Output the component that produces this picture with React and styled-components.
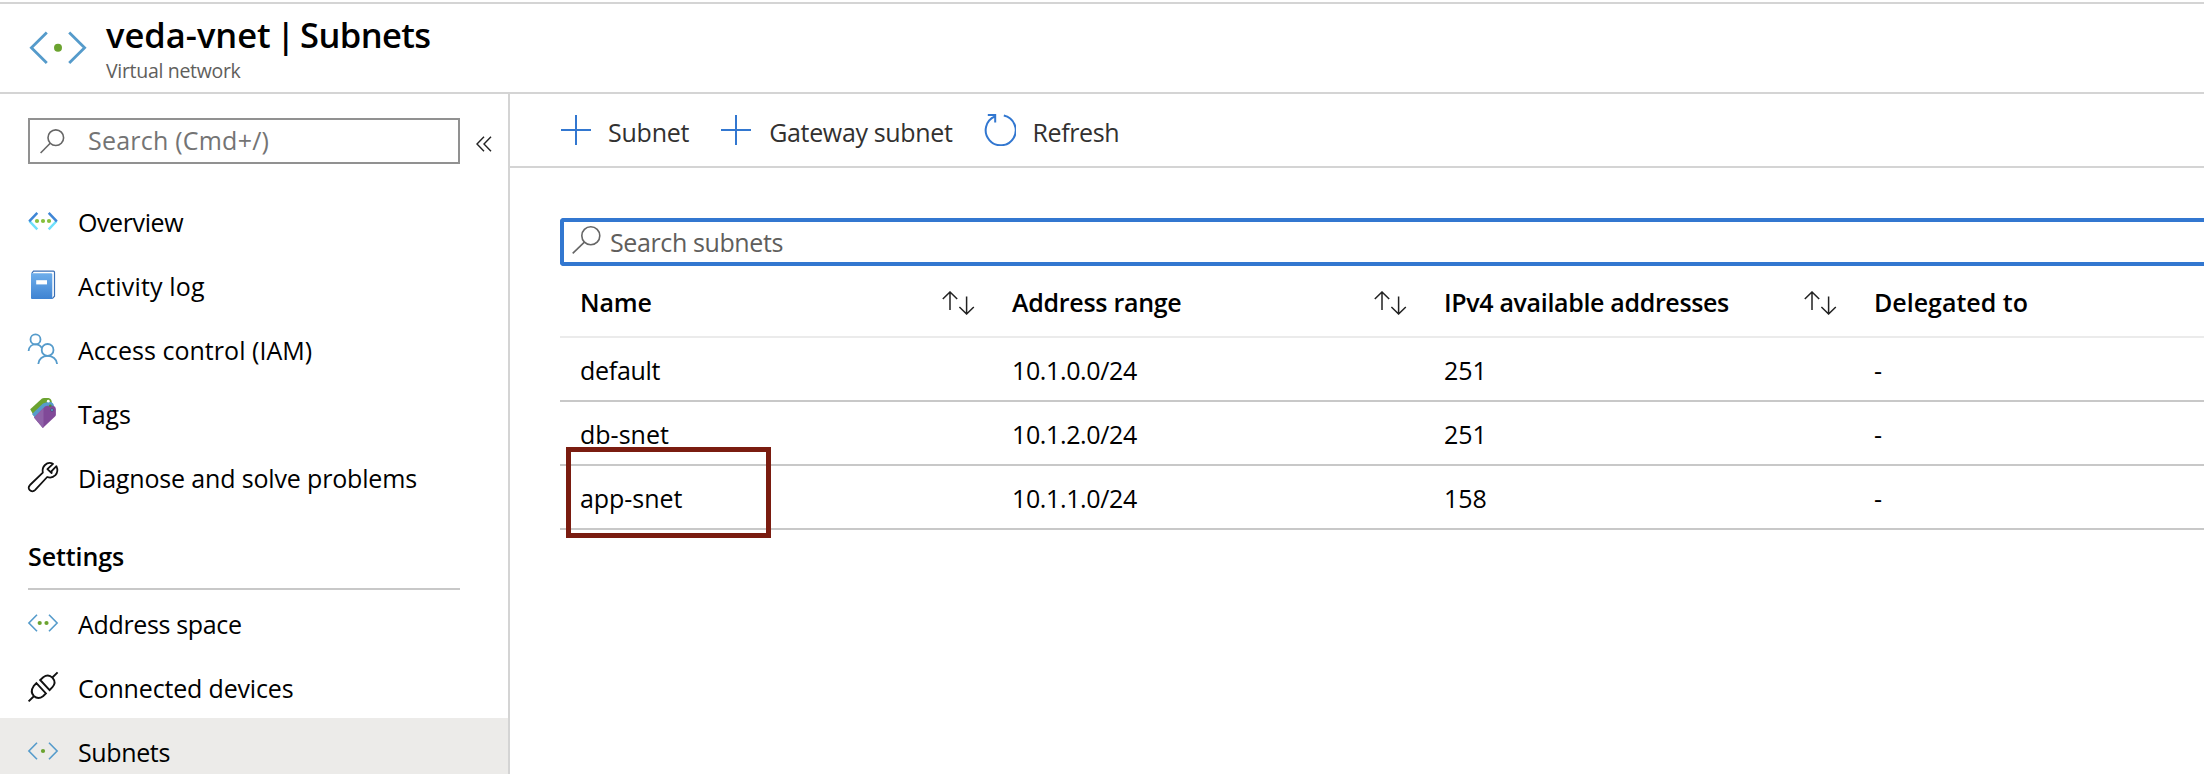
import React from 'react';
import styled, { createGlobalStyle } from 'styled-components';

const GlobalStyle = createGlobalStyle`
  * { box-sizing: border-box; }
  body {
    margin: 0;
    background: #fff;
    color: #000;
    font-family: "Open Sans", "Noto Sans", sans-serif;
    font-size: 25px;
    overflow: hidden;
  }
`;

const Page = styled.div`
  height: 774px;
  padding-top: 2px;
  display: flex;
  flex-direction: column;
  overflow: hidden;
`;

const Header = styled.header`
  flex: none;
  height: 92px;
  display: flex;
  align-items: flex-start;
  padding-left: 28px;
  border-top: 2px solid #d4d4d4;
  border-bottom: 2px solid #d4d4d4;
`;

const HeaderIcon = styled.svg`
  width: 60px;
  height: 34px;
  margin-top: 27px;
`;

const Titles = styled.div`
  padding: 8px 0 0 18px;
`;

const Title = styled.h1`
  margin: 0;
  font-size: 34.5px;
  font-weight: 600;
  line-height: 45px;
  letter-spacing: -0.57px;
  word-spacing: -3px;
  white-space: nowrap;
`;

const ResourceName = styled.span`
  letter-spacing: 0;
`;

const Subtitle = styled.div`
  font-size: 19.5px;
  line-height: 28px;
  letter-spacing: -0.31px;
  color: #605e5c;
`;

const Body = styled.div`
  flex: 1;
  display: flex;
  min-height: 0;
`;

const Sidebar = styled.nav`
  flex: none;
  width: 510px;
  border-right: 2px solid #d4d4d4;
  overflow: hidden;
`;

const SearchRow = styled.div`
  display: flex;
  align-items: center;
  padding: 24px 0 24px 28px;
`;

const MenuSearch = styled.div`
  width: 432px;
  height: 46px;
  border: 2px solid #919191;
  display: flex;
  align-items: center;
  padding-left: 10px;
  gap: 23px;
  color: #747474;
`;

const CollapseIcon = styled.svg`
  width: 16px;
  height: 16px;
  margin: 6px 0 0 16px;
`;

const Text = styled.span`
  white-space: nowrap;
  line-height: 36px;
  padding-top: 4px;
  letter-spacing: ${(p) => p.$track || 0}px;
`;

const Placeholder = styled(Text)`
  padding: 0 0 ${(p) => p.$raise || 0}px;
`;

const NavItem = styled.div`
  height: 64px;
  display: flex;
  align-items: center;
  gap: 20px;
  padding-left: 28px;
  background: ${(p) => (p.$selected ? '#ecebe9' : 'transparent')};
`;

const NavIcon = styled.svg`
  width: 30px;
  height: 30px;
  flex: none;
  overflow: visible;
`;

const SectionTitle = styled.div`
  width: 432px;
  height: 82px;
  margin-left: 28px;
  border-bottom: 2px solid #c8c8c8;
  font-weight: 600;
  padding-top: 26px;
  display: flex;
  align-items: flex-start;
`;

const Main = styled.main`
  flex: 1;
  min-width: 0;
`;

const Toolbar = styled.div`
  height: 74px;
  border-bottom: 2px solid #d4d4d4;
  display: flex;
  align-items: center;
  gap: 32px;
  padding-left: 51px;
  color: #323130;
`;

const Command = styled.div`
  display: flex;
  align-items: center;
  gap: ${(p) => p.$gap}px;
`;

const CommandIcon = styled.svg`
  width: ${(p) => p.$w}px;
  height: 32px;
`;

const Content = styled.div`
  padding: 50px 0 0 50px;
`;

const SubnetSearch = styled.div`
  height: 48px;
  border: 4px solid #3277d0;
  border-right: 0;
  border-radius: 4px 0 0 4px;
  display: flex;
  align-items: center;
  padding-left: 8px;
  gap: 9px;
  color: #605e5c;
`;

const SearchIcon = styled.svg`
  width: ${(p) => p.$w}px;
  height: ${(p) => p.$h}px;
  margin-top: ${(p) => p.$top || 0}px;
`;

const Table = styled.div`
  position: relative;
`;

const Row = styled.div`
  display: grid;
  grid-template-columns: 432px 432px 430px 1fr;
  height: ${(p) => (p.$head ? 72 : 64)}px;
  border-bottom: 2px solid ${(p) => (p.$head ? '#ebebeb' : '#c8c8c8')};
  font-weight: ${(p) => (p.$head ? 600 : 400)};
`;

const Cell = styled.div`
  display: flex;
  align-items: center;
  justify-content: space-between;
  padding: ${(p) => (p.$head ? '0 17px 2px 20px' : '0 17px 3px 20px')};
`;

const SortIcon = styled.svg`
  width: 33px;
  height: 24px;
  margin-top: 6px;
`;

const Highlight = styled.div`
  position: absolute;
  left: 6px;
  top: 181px;
  width: 205px;
  height: 91px;
  border: 5px solid #7a1c10;
`;

function Chevrons({ dots }) {
  return (
    <NavIcon viewBox="0 0 30 30" fill="none">
      <path d="M9 7.8 0.9 16 9 24.2M21 7.8 29.1 16 21 24.2" stroke="#559bcb" strokeWidth="1.6" />
      {dots.map((x) => <circle key={x} cx={x} cy="16" r="2.1" fill="#6ba32f" />)}
    </NavIcon>
  );
}

function OverviewIcon() {
  return (
    <NavIcon viewBox="0 0 30 30" fill="none" strokeWidth="2.5">
      <path d="M9.3 24.3 1.4 16M20.7 24.3 28.6 16" stroke="#6fe0fb" />
      <path d="M9.3 7.9 1.2 16.4M20.7 7.9 28.8 16.4" stroke="#3f86d6" />
      {[9, 15, 21].map((x) => <circle key={x} cx={x} cy="16" r="2.1" fill="#86c03c" />)}
    </NavIcon>
  );
}

function BookIcon() {
  return (
    <NavIcon viewBox="0 0 30 30">
      <defs>
        <linearGradient id="book" x1="0" y1="0" x2="0" y2="1">
          <stop offset="0" stopColor="#6eaeeb" />
          <stop offset="1" stopColor="#3f83d2" />
        </linearGradient>
      </defs>
      <path d="M3.6 4.5 5.5 2.1H25.4Q26.5 2.1 26.5 3.2V27.2L24.3 29.6" fill="#fff" stroke="#3a6fb5" strokeWidth="1.2" />
      <path d="M3 4.2H23Q24.3 4.2 24.3 5.5V30H4Q3 30 3 29Z" fill="url(#book)" />
      <rect x="8.2" y="11.2" width="10.8" height="4.2" fill="#fff" />
    </NavIcon>
  );
}

function PeopleIcon() {
  return (
    <NavIcon viewBox="0 0 30 30" fill="none" stroke="#559bcb" strokeWidth="1.8">
      <circle cx="7.5" cy="6.4" r="5" />
      <circle cx="19.6" cy="16.9" r="5.9" />
      <path d="M0.6 18C0.8 13.8 4 11.4 7.5 11.4 10.3 11.4 12.5 12.6 13.8 15M10.3 31C10.6 25.8 14.8 22.8 19.6 22.8S28.8 25.8 29.1 31" />
    </NavIcon>
  );
}

function TagsIcon() {
  return (
    <NavIcon viewBox="0 0 30 30">
      <path d="M2.2 12.2 14 1.6Q14.8 1 16 1H20.5Q23.4 1.4 23.8 5V8L6 19Z" fill="#6ba32f" />
      <path d="M4 17 15 6.5 19.5 5H22.5Q25.5 5.4 26 9L8 22Z" fill="#559bcb" />
      <path d="M6 20.4 17 9.6Q18 8.8 19.5 8.8H25Q27.8 9.4 27.9 12V18Q27.8 18.8 27 19.6L14.8 31Z" fill="#804998" />
      <path d="M6 20.4 15.5 11.1V30.2L14.8 31Z" fill="#8f62a8" />
      <circle cx="20.3" cy="4.2" r="1.4" fill="#fff" />
      <circle cx="22.3" cy="8.8" r="1.3" fill="#4f8636" />
      <circle cx="24" cy="13" r="1.4" fill="#59b4d9" stroke="#553270" strokeWidth=".7" />
    </NavIcon>
  );
}

function WrenchIcon() {
  return (
    <NavIcon viewBox="0 0 30 30" fill="none" stroke="#111" strokeWidth="1.8" strokeLinejoin="round">
      <path d="M25 2.8C22.5 1.5 19.2 1.8 17 4 14.8 6.2 14.2 8.8 14.8 11.6L2 24C.5 25.6.4 27.6 1.8 29.2 3.2 30.7 5.6 30.6 7 29.2L19.2 16C22 17 25.2 16.4 27.4 14.2 29.4 12 29.8 8.4 28.4 5.2L23.6 10.2V12L19.4 8.2Z" />
    </NavIcon>
  );
}

function PlugIcon() {
  return (
    <NavIcon viewBox="0 0 30 30" fill="none" stroke="#111" strokeWidth="1.9">
      <path d="M29.6 1.4 24.6 6.2M.6 30.4 5.6 25.5M12.2 9 21.6 19.2 24.4 16.2C27 13.2 27 9.6 24.6 6.8 22 4.2 18.2 4.2 15.2 6.2ZM8.4 12.2 17.9 22.4 15 25.2C12 27.4 8.6 27.4 5.8 25 3.2 22.2 3.4 18.4 5.6 15.2Z" />
    </NavIcon>
  );
}

function Sort() {
  return (
    <SortIcon viewBox="0 0 33 24" fill="none" stroke="#222" strokeWidth="1.5">
      <path d="M8 19V1M.8 8 8 1 15.2 8M24.6 5.5V23M17.4 16 24.6 23 31.8 16" />
    </SortIcon>
  );
}

function Plus() {
  return (
    <CommandIcon $w={30} viewBox="0 0 30 32" fill="none" stroke="#3277d0" strokeWidth="2">
      <path d="M15 1V31M0 16H30" />
    </CommandIcon>
  );
}

const menu = [
  ['Overview', <OverviewIcon />, -0.41],
  ['Activity log', <BookIcon />, 0.18],
  ['Access control (IAM)', <PeopleIcon />, 0.04],
  ['Tags', <TagsIcon />, -0.1],
  ['Diagnose and solve problems', <WrenchIcon />, -0.16],
];

const settings = [
  ['Address space', <Chevrons dots={[11.7, 18.5]} />, -0.34],
  ['Connected devices', <PlugIcon />, -0.17],
  ['Subnets', <Chevrons dots={[15]} />, -0.37, true],
];

const columns = [
  ['Name', -0.12],
  ['Address range', -0.28],
  ['IPv4 available addresses', -0.34],
  ['Delegated to', 0],
];

const subnets = [
  { name: 'default', range: '10.1.0.0/24', free: '251', delegated: '-', track: -0.28 },
  { name: 'db-snet', range: '10.1.2.0/24', free: '251', delegated: '-', track: 0 },
  { name: 'app-snet', range: '10.1.1.0/24', free: '158', delegated: '-', track: -0.06 },
];

export default function App() {
  return (
    <Page>
      <GlobalStyle />
      <Header>
        <HeaderIcon viewBox="0 0 60 34" fill="none">
          <path d="M18.8 1.5 3.4 16.7 18.8 32M41.2 1.5 56.6 16.7 41.2 32" stroke="#559bcb" strokeWidth="2.8" />
          <circle cx="30" cy="16.7" r="4" fill="#6ba32f" />
        </HeaderIcon>
        <Titles>
          <Title><ResourceName>veda-vnet</ResourceName> | Subnets</Title>
          <Subtitle>Virtual network</Subtitle>
        </Titles>
      </Header>
      <Body>
        <Sidebar>
          <SearchRow>
            <MenuSearch>
              <SearchIcon $w={25} $h={25} viewBox="0 0 25 25" fill="none" stroke="#666" strokeWidth="1.6">
                <circle cx="15.8" cy="8.7" r="7.8" />
                <path d="M10.2 14.3.6 24" />
              </SearchIcon>
              <Placeholder $track={0.22} $raise={2}>Search (Cmd+/)</Placeholder>
            </MenuSearch>
            <CollapseIcon viewBox="0 0 16 16" fill="none" stroke="#222" strokeWidth="1.4">
              <path d="M8 .8 1 8 8 15.2M15 .8 8 8 15 15.2" />
            </CollapseIcon>
          </SearchRow>
          {menu.map(([label, icon, track]) => (
            <NavItem key={label}>{icon}<Text $track={track}>{label}</Text></NavItem>
          ))}
          <SectionTitle><Text $track={-0.09}>Settings</Text></SectionTitle>
          {settings.map(([label, icon, track, selected]) => (
            <NavItem key={label} $selected={selected}>{icon}<Text $track={track}>{label}</Text></NavItem>
          ))}
        </Sidebar>
        <Main>
          <Toolbar>
            <Command $gap={17}><Plus /><Text $track={-0.23}>Subnet</Text></Command>
            <Command $gap={18}><Plus /><Text $track={-0.35}>Gateway subnet</Text></Command>
            <Command $gap={16}>
              <CommandIcon $w={32} viewBox="0 0 32 32" fill="none" stroke="#3277d0" strokeWidth="2">
                <path d="M19.8 1.6A15 15 0 1 1 11 2.4M3.8 1H11.2V8.4" />
              </CommandIcon>
              <Text $track={-0.39}>Refresh</Text>
            </Command>
          </Toolbar>
          <Content>
            <SubnetSearch>
              <SearchIcon $w={29} $h={28} $top={-4} viewBox="0 0 29 28" fill="none" stroke="#666" strokeWidth="1.6">
                <circle cx="18.8" cy="9.8" r="9" />
                <path d="M12.4 16.2.7 27.4" />
              </SearchIcon>
              <Placeholder $track={-0.39}>Search subnets</Placeholder>
            </SubnetSearch>
            <Table>
              <Row $head>
                {columns.map(([label, track], i) => (
                  <Cell $head key={label}><Text $track={track}>{label}</Text>{i < 3 && <Sort />}</Cell>
                ))}
              </Row>
              {subnets.map((s) => (
                <Row key={s.name}>
                  <Cell><Text $track={s.track}>{s.name}</Text></Cell>
                  <Cell><Text $track={-0.37}>{s.range}</Text></Cell>
                  <Cell><Text>{s.free}</Text></Cell>
                  <Cell><Text>{s.delegated}</Text></Cell>
                </Row>
              ))}
              <Highlight />
            </Table>
          </Content>
        </Main>
      </Body>
    </Page>
  );
}
